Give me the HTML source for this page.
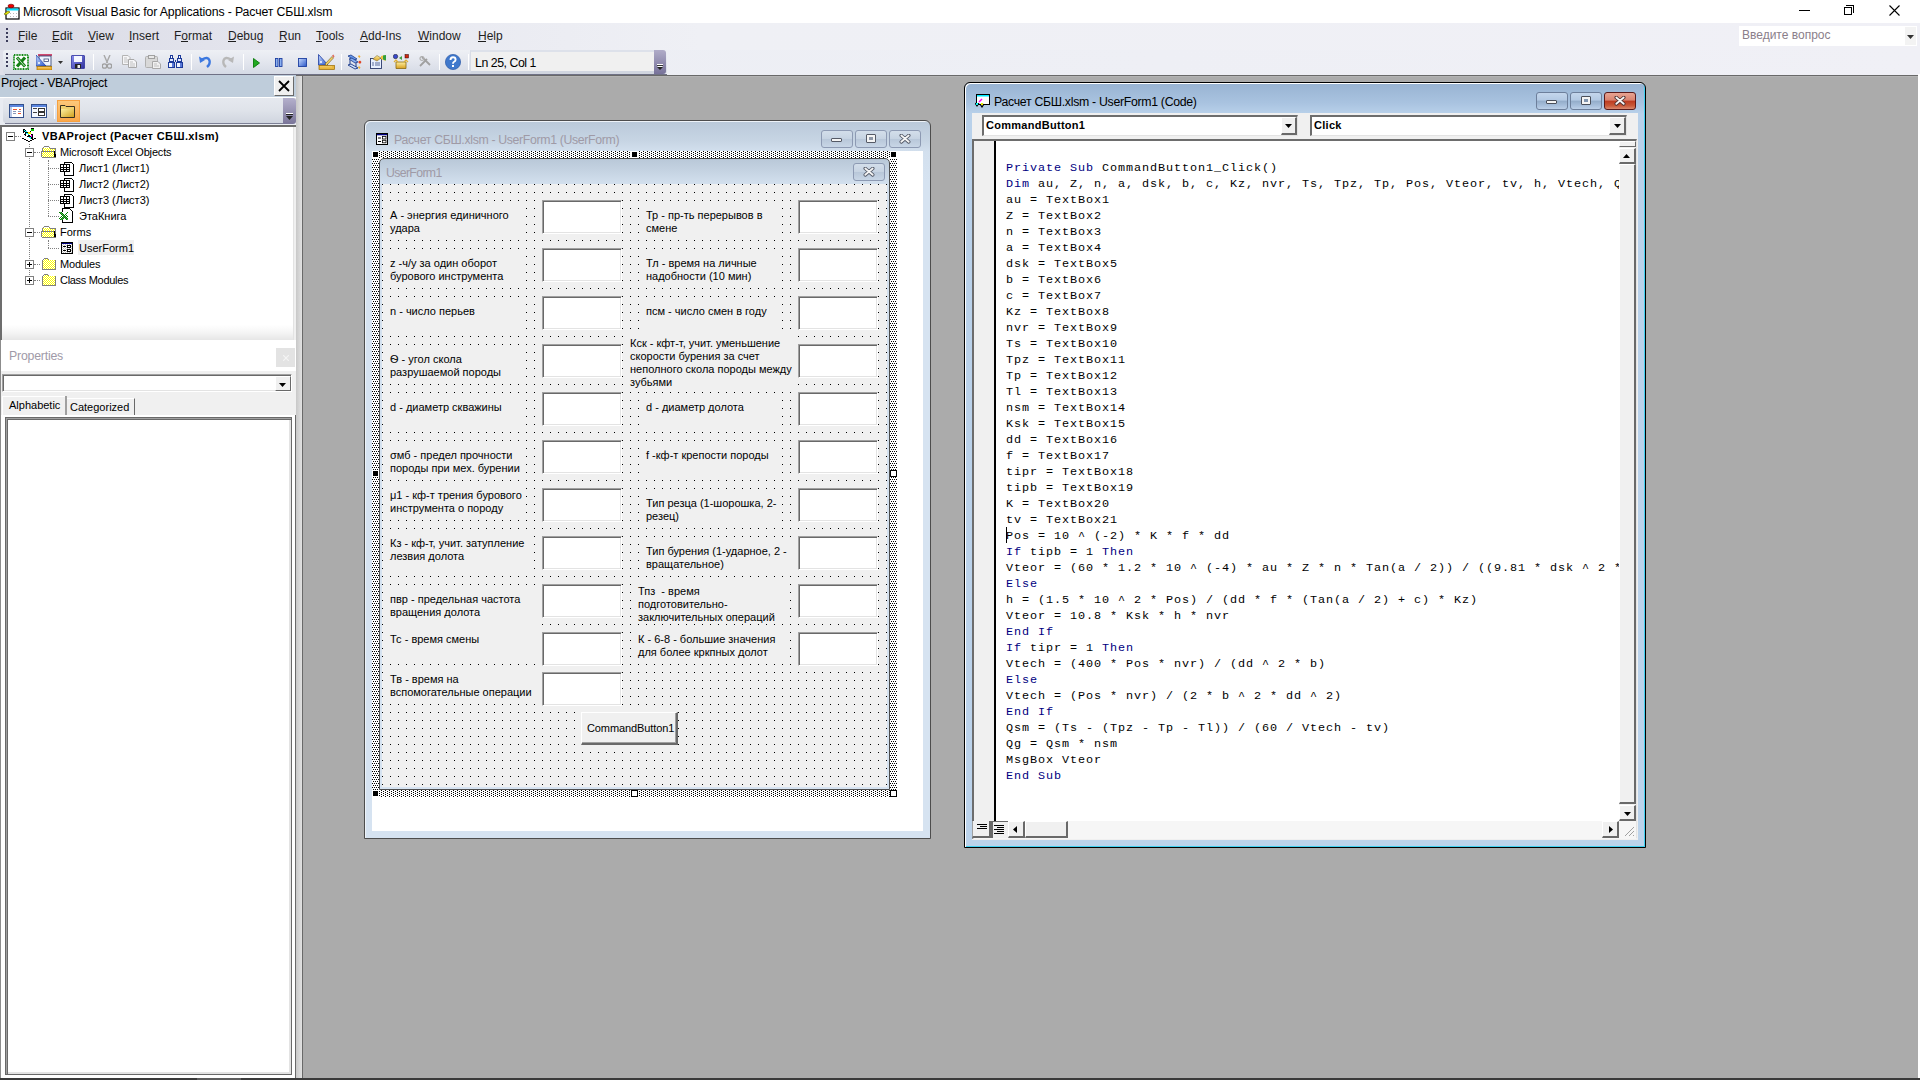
<!DOCTYPE html>
<html><head><meta charset="utf-8">
<style>
*{margin:0;padding:0;box-sizing:border-box}
html,body{width:1920px;height:1080px;overflow:hidden;background:#ababab;font-family:"Liberation Sans",sans-serif;position:relative}
.a{position:absolute}
.t{position:absolute;white-space:pre;line-height:1}
.menu{position:absolute;font-size:12px;color:#1e1e1e;top:29px;white-space:pre;line-height:14px}
.ul{position:absolute;height:1px;background:#1e1e1e}
.tb{position:absolute}
.tree{position:absolute;font-family:"Liberation Sans",sans-serif;font-size:11px;color:#000;white-space:pre;line-height:13px}
.lbl{position:absolute;font-family:"Liberation Sans",sans-serif;font-size:11px;color:#000;line-height:13px;background:#f0f0f0;white-space:pre;padding-left:2px}
.txt{position:absolute;background:#fff;border-top:1px solid #a0a0a0;border-left:1px solid #a0a0a0;border-right:1px solid #fff;border-bottom:1px solid #fff;box-shadow:inset 1px 1px 0 #696969,inset -1px -1px 0 #e3e3e3}
.code{position:absolute;font-family:"Liberation Mono",monospace;font-size:11.8px;letter-spacing:0.92px;line-height:16px;white-space:pre;color:#000}
.kw{color:#00007f}
</style></head><body>
<!-- ===== TITLE BAR ===== -->
<div class="a" style="left:0;top:0;width:1920px;height:23px;background:#fff"></div>
<svg class="a" style="left:2px;top:2px" width="18" height="18" viewBox="0 0 18 18">
 <rect x="4" y="6" width="13" height="11" fill="#fff" stroke="#000" stroke-width="1.2"/>
 <rect x="4.5" y="6.5" width="12" height="2" fill="#00e0ff"/>
 <g fill="#bbb"><rect x="8" y="11" width="1" height="1"/><rect x="11" y="11" width="1" height="1"/><rect x="14" y="11" width="1" height="1"/><rect x="8" y="14" width="1" height="1"/><rect x="11" y="14" width="1" height="1"/><rect x="14" y="14" width="1" height="1"/></g>
 <ellipse cx="9" cy="4" rx="3" ry="1.8" fill="#e00" stroke="#600" stroke-width=".6"/>
 <path d="M2 12 L6 9 L8 10 L4 13 Z" fill="#ee0" stroke="#550" stroke-width=".6"/>
</svg>
<div class="t" style="left:23px;top:6px;font-size:12.3px;letter-spacing:-0.14px;color:#000">Microsoft Visual Basic for Applications - Расчет СБШ.xlsm</div>
<!-- window controls -->
<div class="a" style="left:1799px;top:10px;width:11px;height:1px;background:#000"></div>
<div class="a" style="left:1844px;top:7px;width:8px;height:8px;border:1px solid #000;background:#fff"></div>
<div class="a" style="left:1846px;top:5px;width:8px;height:8px;border-top:1px solid #000;border-right:1px solid #000"></div>
<svg class="a" style="left:1889px;top:5px" width="11" height="11" viewBox="0 0 11 11"><path d="M0.5 0.5L10.5 10.5M10.5 0.5L0.5 10.5" stroke="#000" stroke-width="1.1"/></svg>

<!-- ===== MENU BAR ===== -->
<div class="a" style="left:0;top:23px;width:1920px;height:27px;background:linear-gradient(90deg,#d9dae5 0px,#e6e7ef 300px,#eff0f5 700px,#f0f0f6 1920px)"></div>
<svg class="a" style="left:5px;top:28px" width="4" height="16"><g fill="#3b3b5a"><rect x="1" y="0" width="2" height="2"/><rect x="1" y="4" width="2" height="2"/><rect x="1" y="8" width="2" height="2"/><rect x="1" y="12" width="2" height="2"/></g></svg>
<div class="menu" style="left:18px">File</div><div class="ul" style="left:18px;top:41px;width:6px"></div>
<div class="menu" style="left:52px">Edit</div><div class="ul" style="left:52px;top:41px;width:6px"></div>
<div class="menu" style="left:88px">View</div><div class="ul" style="left:88px;top:41px;width:7px"></div>
<div class="menu" style="left:129px">Insert</div><div class="ul" style="left:129px;top:41px;width:3px"></div>
<div class="menu" style="left:174px">Format</div><div class="ul" style="left:181px;top:41px;width:7px"></div>
<div class="menu" style="left:228px">Debug</div><div class="ul" style="left:228px;top:41px;width:8px"></div>
<div class="menu" style="left:279px">Run</div><div class="ul" style="left:279px;top:41px;width:7px"></div>
<div class="menu" style="left:316px">Tools</div><div class="ul" style="left:316px;top:41px;width:6px"></div>
<div class="menu" style="left:360px">Add-Ins</div><div class="ul" style="left:360px;top:41px;width:8px"></div>
<div class="menu" style="left:418px">Window</div><div class="ul" style="left:418px;top:41px;width:11px"></div>
<div class="menu" style="left:478px">Help</div><div class="ul" style="left:478px;top:41px;width:8px"></div>
<!-- ask box -->
<div class="a" style="left:1739px;top:26px;width:178px;height:20px;background:#fff"></div>
<div class="a" style="left:1905px;top:27px;width:11px;height:18px;background:#f3f3f3"></div>
<div class="t" style="left:1742px;top:29px;font-size:12px;color:#8a7e8a">Введите вопрос</div>
<svg class="a" style="left:1907px;top:35px" width="7" height="4"><path d="M0 0H7L3.5 4Z" fill="#333"/></svg>

<!-- ===== TOOLBAR ===== -->
<div class="a" style="left:0;top:50px;width:1920px;height:25px;background:linear-gradient(90deg,#dfe0ea 0px,#eceef4 400px,#f0f0f6 1920px)"></div>
<div class="a" style="left:3px;top:50px;width:664px;height:24px;border-radius:3px;background:linear-gradient(180deg,#eef0f5 0%,#e3e6ee 50%,#d5dae5 100%)"></div>
<div class="a" style="left:5px;top:74px;width:662px;height:1px;background:#6f7185"></div>
<div class="a" style="left:0;top:75px;width:1918px;height:1px;background:#696969"></div>
<div class="a" style="left:303px;top:76px;width:1615px;height:1px;background:#b4b4b4"></div>
<div class="a" style="left:1918px;top:74px;width:2px;height:1004px;background:#fff"></div>
<svg class="a" style="left:5px;top:53px" width="4" height="16"><g fill="#3b3b5a"><rect x="1" y="0" width="2" height="2"/><rect x="1" y="4" width="2" height="2"/><rect x="1" y="8" width="2" height="2"/><rect x="1" y="12" width="2" height="2"/></g></svg>
<svg class="a" style="left:0;top:0;width:0;height:0"><defs>
<pattern id="gck" width="2" height="2" patternUnits="userSpaceOnUse"><rect width="2" height="2" fill="#fff"/><rect x="0" y="0" width="1" height="1" fill="#008a00"/><rect x="1" y="1" width="1" height="1" fill="#008a00"/></pattern>
<linearGradient id="svg1" x1="0" y1="0" x2="1" y2="1"><stop offset="0" stop-color="#8a8ef0"/><stop offset="1" stop-color="#2e2f9a"/></linearGradient>
<linearGradient id="bl1" x1="0" y1="0" x2="1" y2="1"><stop offset="0" stop-color="#c8dcff"/><stop offset="1" stop-color="#2855c8"/></linearGradient>
<linearGradient id="yl1" x1="0" y1="0" x2="0" y2="1"><stop offset="0" stop-color="#fff0a0"/><stop offset="1" stop-color="#d8a020"/></linearGradient>
</defs></svg>
<!-- excel -->
<svg class="a" style="left:13px;top:54px" width="16" height="16" viewBox="0 0 16 16"><rect x="1" y="1" width="14" height="14" fill="#fff" stroke="#138a13" stroke-width="2" stroke-dasharray="1 .6"/><path d="M4 3.5L12 12.5M12 3.5L4 12.5" stroke="#168016" stroke-width="3.2"/><path d="M4.5 4L11.5 12" stroke="#e8f8e8" stroke-width=".8"/></svg>
<!-- userform insert -->
<svg class="a" style="left:36px;top:54px" width="16" height="16" viewBox="0 0 16 16"><rect x="2" y="0" width="14" height="2" fill="#d04a70"/><rect x="3" y="2" width="12" height="10" fill="#eef4ff" stroke="#2a3a6a" stroke-width=".8"/><rect x="8" y="5" width="4.5" height="2.5" fill="#fff" stroke="#3a4a7a" stroke-width=".8"/><path d="M0 1V12H10Z" fill="url(#bl1)" stroke="#1a3aa0" stroke-width=".7"/><circle cx="3" cy="9" r="1" fill="#fff"/><rect x="1" y="12.5" width="15" height="3.5" fill="#f0b030" stroke="#a07000" stroke-width=".7"/><path d="M3 13V14M5 13V14M7 13V14M9 13V14M11 13V14M13 13V14" stroke="#fff3c0" stroke-width=".6"/></svg>
<svg class="a" style="left:58px;top:61px" width="5" height="3"><path d="M0 0H5L2.5 3Z" fill="#333"/></svg>
<!-- save -->
<svg class="a" style="left:71px;top:55px" width="14" height="14" viewBox="0 0 14 14"><rect x="0.5" y="0.5" width="13" height="13" rx=".5" fill="url(#svg1)" stroke="#3034a0" stroke-width=".8"/><rect x="3" y="1" width="8" height="6" fill="#f4f6ff"/><rect x="4" y="9" width="6" height="4.5" fill="#222"/><rect x="6.5" y="10" width="2.5" height="3" fill="#eee"/></svg>
<div class="a" style="left:93px;top:54px;width:1px;height:16px;background:#fff"></div>
<!-- cut -->
<svg class="a" style="left:102px;top:55px" width="10" height="14" viewBox="0 0 10 14"><path d="M2 0L5.5 8M8 0L4.5 8" stroke="#a8a8a8" stroke-width="1.4"/><circle cx="2.5" cy="11" r="2.2" fill="none" stroke="#a0a0a0" stroke-width="1.3"/><circle cx="7.5" cy="11" r="2.2" fill="none" stroke="#a0a0a0" stroke-width="1.3"/></svg>
<!-- copy -->
<svg class="a" style="left:122px;top:55px" width="15" height="13" viewBox="0 0 15 13"><path d="M0.5 0.5H6L8 2.5V9.5H0.5Z" fill="#f6f6f8" stroke="#b4b4b4"/><path d="M6.5 4.5H12L14.5 7V12.5H6.5Z" fill="#f6f6f8" stroke="#a8a8a8"/><path d="M2 3H5M2 5H6M2 7H6M8 7H11M8 9H13M8 11H13" stroke="#c0c0c0"/></svg>
<!-- paste -->
<svg class="a" style="left:145px;top:55px" width="16" height="14" viewBox="0 0 16 14"><rect x="0.5" y="1.5" width="12" height="11" rx="1" fill="#d8d8d8" stroke="#b0b0b0"/><rect x="3.5" y="0.5" width="6" height="3" fill="#e8e8e8" stroke="#a0a0a0"/><path d="M7.5 6.5H13L15.5 9V13.5H7.5Z" fill="#f0f0f0" stroke="#a8a8a8"/><path d="M9 9H12M9 11H14" stroke="#c0c0c0"/></svg>
<!-- find -->
<svg class="a" style="left:168px;top:55px" width="15" height="13" viewBox="0 0 15 13" shape-rendering="crispEdges"><path d="M2 0H5V3H6V7H7V13H0V7H1V3H2Z" fill="#1c3a9a"/><path d="M10 0H13V3H14V7H15V13H8V7H9V3H10Z" fill="#1c3a9a"/><rect x="3" y="1" width="1" height="2" fill="#fff"/><rect x="11" y="1" width="1" height="2" fill="#fff"/><rect x="2" y="4" width="3" height="2" fill="#dfe8ff"/><rect x="10" y="4" width="3" height="2" fill="#dfe8ff"/><rect x="1" y="8" width="3" height="4" fill="#f0f4ff"/><rect x="9" y="8" width="3" height="4" fill="#f0f4ff"/><rect x="4" y="8" width="2" height="4" fill="#5a7ad8"/><rect x="12" y="8" width="2" height="4" fill="#5a7ad8"/><rect x="7" y="5" width="1" height="2" fill="#1c3a9a"/></svg>
<div class="a" style="left:191px;top:54px;width:1px;height:16px;background:#fff"></div>
<!-- undo -->
<svg class="a" style="left:199px;top:55px" width="13" height="13" viewBox="0 0 13 13"><path d="M3 4.5 Q9 1 10.5 5.5 Q11.5 9 8 12" fill="none" stroke="#3c78e0" stroke-width="2.4"/><path d="M0 1.5L1 8L6 5Z" fill="#3c78e0"/></svg>
<!-- redo -->
<svg class="a" style="left:221px;top:55px" width="13" height="13" viewBox="0 0 13 13"><path d="M10 4.5 Q4 1 2.5 5.5 Q1.5 9 5 12" fill="none" stroke="#b8b8b8" stroke-width="2.4"/><path d="M13 1.5L12 8L7 5Z" fill="#b8b8b8"/></svg>
<div class="a" style="left:243px;top:54px;width:1px;height:16px;background:#fff"></div>
<!-- run -->
<svg class="a" style="left:253px;top:58px" width="7" height="10"><path d="M0.5 0.5L6.5 5L0.5 9.5Z" fill="#22aa22" stroke="#0a7a0a" stroke-width=".9"/></svg>
<!-- pause -->
<svg class="a" style="left:275px;top:58px" width="8" height="9"><rect x="0.5" y="0.5" width="2.5" height="8" fill="#8ab0f0" stroke="#1d3fa0" stroke-width=".9"/><rect x="4.5" y="0.5" width="2.5" height="8" fill="#8ab0f0" stroke="#1d3fa0" stroke-width=".9"/></svg>
<!-- stop -->
<svg class="a" style="left:298px;top:58px" width="9" height="9"><rect x="0.5" y="0.5" width="8" height="8" fill="url(#bl1)" stroke="#1d3fa0" stroke-width=".9"/></svg>
<!-- design mode -->
<svg class="a" style="left:318px;top:54px" width="17" height="16" viewBox="0 0 17 16"><path d="M0.5 0.5V11H10Z" fill="url(#bl1)" stroke="#1a3aa0" stroke-width=".8"/><circle cx="3" cy="8" r="1" fill="#fff"/><path d="M7 10L14 2.5L15.5 4L8.5 11.5Z" fill="#f0d060" stroke="#6a5a30" stroke-width=".6"/><path d="M14 1.5L15.5 0.5L16.5 2.5L15.5 4Z" fill="#e07060"/><rect x="1" y="11.5" width="15.5" height="4" fill="#e8b63a" stroke="#9a6a00" stroke-width=".7"/><path d="M3 12V13.5M5 12V13.5M7 12V13.5M9 12V13.5M11 12V13.5M13 12V13.5" stroke="#fff0b0" stroke-width=".6"/></svg>
<div class="a" style="left:341px;top:54px;width:1px;height:16px;background:#fff"></div>
<!-- project explorer -->
<svg class="a" style="left:347px;top:54px" width="17" height="16" viewBox="0 0 17 16"><path d="M1 2L4 1L10 5L7 6Z" fill="#6a9aec" stroke="#1a3a8a" stroke-width=".8"/><path d="M2 5L5 4L11 8L8 9Z" fill="#8ab0f0" stroke="#1a3a8a" stroke-width=".8"/><path d="M1 11L4 10L11 14L8 15Z" fill="#d0e0f8" stroke="#1a3a8a" stroke-width=".9"/><path d="M3 6V10M9 9V13" stroke="#1a3a8a"/><path d="M11 8L13 6.5L14.5 8L13 10Z" fill="#e04020"/><path d="M12 1L13.5 2.5L12.5 4L11 2.5Z" fill="#f0b030"/><path d="M12 12L13.5 13.5L12.5 15L11 13.5Z" fill="#f0b030"/></svg>
<!-- properties -->
<svg class="a" style="left:370px;top:55px" width="17" height="14" viewBox="0 0 17 14"><rect x="0.5" y="3.5" width="11" height="10" fill="#e8f0ff" stroke="#2a3a6a" stroke-width=".9"/><path d="M2 8H4M5 8H10M2 10H4M5 10H10" stroke="#5a6a9a"/><path d="M3 4L7 0.5L11 3L7 6Z" fill="url(#yl1)" stroke="#8a7030" stroke-width=".6"/><path d="M11 1L15.5 0V6L11 4Z" fill="#f0c040"/><path d="M13 0.5L16 0V5.5L13 4.5Z" fill="#30a040"/></svg>
<!-- object browser -->
<svg class="a" style="left:393px;top:54px" width="17" height="15" viewBox="0 0 17 15"><circle cx="2.5" cy="2.5" r="2.2" fill="#3a4ad0" stroke="#111" stroke-width=".5"/><rect x="12" y="0.5" width="3.5" height="3.5" fill="#d02a10" stroke="#300" stroke-width=".5"/><path d="M6 4L9 2V6Z" fill="#40a040"/><path d="M3 8H13V14.5H3Z" fill="url(#yl1)" stroke="#8a6a10" stroke-width=".8"/><path d="M1 8L3 6L5 8M11 8L13 6L15 8" fill="none" stroke="#e0b030" stroke-width="1.2"/></svg>
<!-- toolbox -->
<svg class="a" style="left:419px;top:56px" width="12" height="11" viewBox="0 0 12 11"><path d="M1 10L8 3M3 1L11 9" stroke="#a0a0a0" stroke-width="1.8"/><circle cx="3" cy="2.5" r="2" fill="none" stroke="#b0b0b0" stroke-width="1.2"/></svg>
<div class="a" style="left:439px;top:54px;width:1px;height:16px;background:#fff"></div>
<!-- help -->
<svg class="a" style="left:445px;top:54px" width="16" height="16" viewBox="0 0 16 16"><circle cx="8" cy="8" r="7.6" fill="#3f78cc" stroke="#2c5aa8" stroke-width=".7"/><path d="M5.5 6 Q5.5 3.3 8 3.3 Q10.6 3.3 10.6 5.7 Q10.6 7.2 8.8 8 Q8 8.4 8 9.8" fill="none" stroke="#fff" stroke-width="1.9"/><rect x="7" y="11" width="2" height="2" fill="#fff"/></svg>
<div class="a" style="left:468px;top:54px;width:1px;height:16px;background:#fff"></div>
<!-- Ln field -->
<div class="a" style="left:470px;top:50px;width:185px;height:24px;background:#f0f0f0;border-top:2px solid #dde1ea;border-bottom:3px solid #d0d5df;border-left:1px solid #d8dce5"></div>
<div class="t" style="left:475px;top:57px;font-size:12.3px;letter-spacing:-0.45px;color:#000">Ln 25, Col 1</div>
<div class="a" style="left:654px;top:50px;width:12px;height:24px;border-radius:0 3px 3px 0;background:linear-gradient(180deg,#b0acc8,#77729a)"></div>
<svg class="a" style="left:657px;top:64px" width="7" height="7"><rect x="0" y="0" width="6" height="1" fill="#fff"/><path d="M0 2H6L3 5Z" fill="#fff"/><rect x="0" y="1" width="6" height="1" fill="#333"/><path d="M0 3H6L3 6Z" fill="#222"/></svg>
<!-- ===== LEFT DOCK ===== -->
<div class="a" style="left:0;top:76px;width:303px;height:1004px;background:#f0f0f0"></div>
<div class="a" style="left:302px;top:76px;width:1px;height:1002px;background:#696969"></div>
<!-- project title -->
<div class="a" style="left:0;top:75px;width:296px;height:22px;background:#bfcddb"></div>
<div class="t" style="left:1px;top:77px;font-size:12.3px;letter-spacing:-0.3px;color:#000">Project - VBAProject</div>
<div class="a" style="left:274px;top:76px;width:20px;height:20px;background:#f0f0f0;border-right:1px solid #696969;border-bottom:1px solid #696969;border-top:1px solid #fff;border-left:1px solid #fff"></div>
<svg class="a" style="left:278px;top:80px" width="12" height="12"><path d="M1 1L11 11M11 1L1 11" stroke="#000" stroke-width="1.8"/></svg>
<!-- project toolbar -->
<div class="a" style="left:0;top:97px;width:296px;height:1px;background:#fff"></div>
<div class="a" style="left:0;top:98px;width:296px;height:27px;background:#e9ecf2"></div>
<div class="a" style="left:3px;top:98px;width:293px;height:25px;border-radius:3px;background:linear-gradient(180deg,#e6e9ef 0%,#dfe3ea 50%,#d0d5df 100%)"></div>
<div class="a" style="left:5px;top:123px;width:278px;height:1px;background:#7d8096"></div>
<div class="a" style="left:283px;top:98px;width:13px;height:26px;border-radius:0 3px 3px 0;background:linear-gradient(180deg,#b4b0cc,#7a7599)"></div>
<svg class="a" style="left:286px;top:113px" width="8" height="8"><rect x="0" y="0" width="7" height="1" fill="#fff"/><rect x="0" y="1" width="7" height="1" fill="#222"/><path d="M0 3H7L3.5 7Z" fill="#222"/></svg>
<!-- view code icon -->
<svg class="a" style="left:9px;top:104px" width="15" height="14" viewBox="0 0 15 14"><rect x="0.5" y="0.5" width="14" height="13" fill="#fff" stroke="#34508a"/><rect x="1" y="1" width="13" height="2" fill="#5b86e0"/><rect x="1" y="3" width="2" height="10" fill="#b8c8e8"/><rect x="4" y="5" width="4" height="1" fill="#ee5533"/><rect x="10" y="5" width="2" height="1" fill="#ee5533"/><rect x="4" y="7" width="3" height="1" fill="#8898b8"/><rect x="9" y="7" width="3" height="1" fill="#8898b8"/><rect x="4" y="9" width="3" height="1" fill="#8898b8"/><rect x="9" y="9" width="3" height="1" fill="#ee5533"/></svg>
<!-- view object icon -->
<svg class="a" style="left:31px;top:104px" width="16" height="14" viewBox="0 0 16 14"><rect x="0.5" y="0.5" width="15" height="13" fill="#f4f8ff" stroke="#34508a"/><rect x="1" y="1" width="14" height="2" fill="#5b86e0"/><rect x="2" y="4" width="4" height="1" fill="#444"/><rect x="2" y="8" width="4" height="1" fill="#444"/><rect x="7.5" y="4.5" width="6" height="3" fill="#fff" stroke="#333"/><rect x="7.5" y="8.5" width="6" height="3" fill="#fff" stroke="#333"/></svg>
<div class="a" style="left:54px;top:105px;width:1px;height:14px;background:#fff"></div>
<!-- folder highlighted -->
<div class="a" style="left:57px;top:100px;width:23px;height:22px;background:linear-gradient(180deg,#fdc87a,#fba84a);border:1px solid #f6a040"></div>
<svg class="a" style="left:60px;top:104px" width="16" height="14" viewBox="0 0 16 14"><path d="M0.5 1.5H5L6 2.5H14.5V13.5H0.5Z" fill="#f0d070" stroke="#3a3020"/><path d="M1 5H14V13H1Z" fill="url(#fg)"/><defs><linearGradient id="fg" x1="0" y1="0" x2="1" y2="1"><stop offset="0" stop-color="#fff0a0"/><stop offset="1" stop-color="#d0a020"/></linearGradient></defs></svg>
<!-- tree border -->
<div class="a" style="left:0;top:125px;width:296px;height:2px;background:#6d6d6d"></div>
<div class="a" style="left:0;top:125px;width:2px;height:215px;background:#6d6d6d"></div>
<div class="a" style="left:2px;top:127px;width:292px;height:213px;background:linear-gradient(180deg,#fff 0,#fff 198px,#f4f4f4 206px,#e6e6e6 213px)"></div>
<div class="a" style="left:293px;top:127px;width:1px;height:213px;background:#e3e3e3"></div>
<!-- tree lines -->
<div class="a" style="left:29px;top:144px;width:1px;height:137px;border-left:1px dotted #808080"></div>
<div class="a" style="left:15px;top:136px;width:6px;height:1px;border-top:1px dotted #808080"></div>
<div class="a" style="left:34px;top:152px;width:6px;height:1px;border-top:1px dotted #808080"></div>
<div class="a" style="left:34px;top:232px;width:6px;height:1px;border-top:1px dotted #808080"></div>
<div class="a" style="left:34px;top:264px;width:6px;height:1px;border-top:1px dotted #808080"></div>
<div class="a" style="left:34px;top:280px;width:6px;height:1px;border-top:1px dotted #808080"></div>
<div class="a" style="left:48px;top:160px;width:1px;height:56px;border-left:1px dotted #808080"></div>
<div class="a" style="left:48px;top:240px;width:1px;height:8px;border-left:1px dotted #808080"></div>
<div class="a" style="left:48px;top:168px;width:11px;height:1px;border-top:1px dotted #808080"></div>
<div class="a" style="left:48px;top:184px;width:11px;height:1px;border-top:1px dotted #808080"></div>
<div class="a" style="left:48px;top:200px;width:11px;height:1px;border-top:1px dotted #808080"></div>
<div class="a" style="left:48px;top:216px;width:11px;height:1px;border-top:1px dotted #808080"></div>
<div class="a" style="left:48px;top:248px;width:11px;height:1px;border-top:1px dotted #808080"></div>
<!-- expanders -->
<div class="a" style="left:6px;top:132px;width:9px;height:9px;border:1px solid #808080;background:#fff"></div><div class="a" style="left:8px;top:136px;width:5px;height:1px;background:#000"></div>
<div class="a" style="left:25px;top:148px;width:9px;height:9px;border:1px solid #808080;background:#fff"></div><div class="a" style="left:27px;top:152px;width:5px;height:1px;background:#000"></div>
<div class="a" style="left:25px;top:228px;width:9px;height:9px;border:1px solid #808080;background:#fff"></div><div class="a" style="left:27px;top:232px;width:5px;height:1px;background:#000"></div>
<div class="a" style="left:25px;top:260px;width:9px;height:9px;border:1px solid #808080;background:#fff"></div><div class="a" style="left:27px;top:264px;width:5px;height:1px;background:#000"></div><div class="a" style="left:29px;top:262px;width:1px;height:5px;background:#000"></div>
<div class="a" style="left:25px;top:276px;width:9px;height:9px;border:1px solid #808080;background:#fff"></div><div class="a" style="left:27px;top:280px;width:5px;height:1px;background:#000"></div><div class="a" style="left:29px;top:278px;width:1px;height:5px;background:#000"></div>
<!-- icons -->
<svg class="a" style="left:0;top:0;width:0;height:0"><defs>
<pattern id="yh" width="2" height="2" patternUnits="userSpaceOnUse"><rect width="2" height="2" fill="#fff"/><rect x="0" y="0" width="1" height="1" fill="#ffff00"/><rect x="1" y="1" width="1" height="1" fill="#ffff00"/></pattern>
<pattern id="yh2" width="2" height="2" patternUnits="userSpaceOnUse"><rect width="2" height="2" fill="#c0c0c0"/><rect x="0" y="0" width="1" height="1" fill="#ffff00"/><rect x="1" y="1" width="1" height="1" fill="#ffff00"/></pattern>
<pattern id="gh" width="2" height="2" patternUnits="userSpaceOnUse"><rect width="2" height="2" fill="#fff"/><rect x="0" y="0" width="1" height="1" fill="#c0c0c0"/><rect x="1" y="1" width="1" height="1" fill="#c0c0c0"/></pattern>
<pattern id="grh" width="2" height="2" patternUnits="userSpaceOnUse"><rect width="2" height="2" fill="#fff"/><rect x="0" y="0" width="1" height="1" fill="#008000"/><rect x="1" y="1" width="1" height="1" fill="#008000"/></pattern>
</defs></svg>
<svg class="a" style="left:21px;top:128px" width="16" height="16" viewBox="0 0 16 16" shape-rendering="crispEdges">
<path d="M1 10H3V11H5V12H7V13H9V12H11V11H13V10H15V11H13V12H11V13H9V14H7V13H5V12H3V11H1Z" fill="#000"/>
<path d="M2 1H4V2H5V3H6V4H7V5H8V7H9V8H10V9H11V10H12V11H10V10H9V9H6V8H4V7H3V5H2Z" fill="#000"/>
<rect x="3" y="2" width="1" height="1" fill="#0ff"/><rect x="4" y="3" width="2" height="1" fill="#0ff"/><rect x="5" y="5" width="2" height="1" fill="#0ff"/><rect x="7" y="6" width="1" height="1" fill="#0ff"/><rect x="8" y="9" width="2" height="1" fill="#0ff"/><rect x="9" y="10" width="1" height="1" fill="#0ff"/>
<rect x="3" y="4" width="1" height="2" fill="#fff"/><rect x="5" y="6" width="2" height="2" fill="#fff"/>
<rect x="10" y="0" width="3" height="1" fill="#000"/><rect x="10" y="1" width="3" height="2" fill="#0c0"/><rect x="9" y="3" width="1" height="2" fill="#000"/>
<rect x="7" y="4" width="3" height="2" fill="#ee0"/><rect x="10" y="6" width="2" height="4" fill="#000"/><rect x="10" y="7" width="1" height="2" fill="#f0f"/>
</svg>
<svg class="a" style="left:41px;top:146px" width="15" height="13" viewBox="0 0 15 13" shape-rendering="crispEdges">
<rect x="3" y="0" width="5" height="1" fill="#808080"/><rect x="2" y="1" width="1" height="1" fill="#808080"/><rect x="8" y="1" width="1" height="1" fill="#808080"/><rect x="3" y="1" width="5" height="1" fill="#fff"/>
<rect x="1" y="2" width="1" height="3" fill="#808080"/><rect x="9" y="2" width="5" height="1" fill="#808080"/><rect x="14" y="2" width="1" height="10" fill="#808080"/>
<rect x="2" y="2" width="7" height="1" fill="url(#yh)"/><rect x="2" y="3" width="12" height="2" fill="url(#yh)"/>
<rect x="0" y="5" width="13" height="1" fill="#808080"/><rect x="0" y="6" width="1" height="5" fill="#808080"/><rect x="1" y="6" width="12" height="5" fill="url(#yh)"/>
<rect x="13" y="5" width="1" height="3" fill="#000"/><rect x="13" y="8" width="2" height="3" fill="#000"/>
<rect x="1" y="11" width="14" height="1" fill="#808080"/>
</svg>
<svg class="a" style="left:41px;top:226px" width="15" height="13" viewBox="0 0 15 13" shape-rendering="crispEdges">
<rect x="3" y="0" width="5" height="1" fill="#808080"/><rect x="2" y="1" width="1" height="1" fill="#808080"/><rect x="8" y="1" width="1" height="1" fill="#808080"/><rect x="3" y="1" width="5" height="1" fill="#fff"/>
<rect x="1" y="2" width="1" height="3" fill="#808080"/><rect x="9" y="2" width="5" height="1" fill="#808080"/><rect x="14" y="2" width="1" height="10" fill="#808080"/>
<rect x="2" y="2" width="7" height="1" fill="url(#yh)"/><rect x="2" y="3" width="12" height="2" fill="url(#yh)"/>
<rect x="0" y="5" width="13" height="1" fill="#808080"/><rect x="0" y="6" width="1" height="5" fill="#808080"/><rect x="1" y="6" width="12" height="5" fill="url(#yh)"/>
<rect x="13" y="5" width="1" height="3" fill="#000"/><rect x="13" y="8" width="2" height="3" fill="#000"/>
<rect x="1" y="11" width="14" height="1" fill="#808080"/>
</svg>
<svg class="a" style="left:42px;top:258px" width="14" height="12" viewBox="0 0 14 12" shape-rendering="crispEdges">
<path d="M1 1H2V0H6V1H7V2H14V12H0V2H1Z" fill="#808080"/><rect x="2" y="1" width="4" height="1" fill="url(#yh)"/><rect x="1" y="2" width="12" height="9" fill="url(#yh)"/>
</svg>
<svg class="a" style="left:42px;top:274px" width="14" height="12" viewBox="0 0 14 12" shape-rendering="crispEdges">
<path d="M1 1H2V0H6V1H7V2H14V12H0V2H1Z" fill="#808080"/><rect x="2" y="1" width="4" height="1" fill="url(#yh)"/><rect x="1" y="2" width="12" height="9" fill="url(#yh)"/>
</svg>
<svg class="a" style="left:60px;top:161px" width="16" height="15" viewBox="0 0 16 15" shape-rendering="crispEdges"><path d="M4 1H12V2H13V3H14V15H4Z" fill="#000"/><path d="M5 2H12V3H13V14H5Z" fill="#fff"/><rect x="12" y="2" width="1" height="1" fill="#000"/><rect x="0" y="3" width="10" height="8" fill="#000"/><rect x="1" y="4" width="2" height="2" fill="#fff"/><rect x="4" y="4" width="2" height="2" fill="#fff"/><rect x="7" y="4" width="2" height="2" fill="#fff"/><rect x="1" y="7" width="2" height="1" fill="#fff"/><rect x="4" y="7" width="2" height="1" fill="#fff"/><rect x="7" y="7" width="2" height="1" fill="#fff"/><rect x="1" y="9" width="2" height="1" fill="#fff"/><rect x="4" y="9" width="2" height="1" fill="#fff"/><rect x="7" y="9" width="2" height="1" fill="#fff"/></svg>
<svg class="a" style="left:60px;top:177px" width="16" height="15" viewBox="0 0 16 15" shape-rendering="crispEdges"><path d="M4 1H12V2H13V3H14V15H4Z" fill="#000"/><path d="M5 2H12V3H13V14H5Z" fill="#fff"/><rect x="12" y="2" width="1" height="1" fill="#000"/><rect x="0" y="3" width="10" height="8" fill="#000"/><rect x="1" y="4" width="2" height="2" fill="#fff"/><rect x="4" y="4" width="2" height="2" fill="#fff"/><rect x="7" y="4" width="2" height="2" fill="#fff"/><rect x="1" y="7" width="2" height="1" fill="#fff"/><rect x="4" y="7" width="2" height="1" fill="#fff"/><rect x="7" y="7" width="2" height="1" fill="#fff"/><rect x="1" y="9" width="2" height="1" fill="#fff"/><rect x="4" y="9" width="2" height="1" fill="#fff"/><rect x="7" y="9" width="2" height="1" fill="#fff"/></svg>
<svg class="a" style="left:60px;top:193px" width="16" height="15" viewBox="0 0 16 15" shape-rendering="crispEdges"><path d="M4 1H12V2H13V3H14V15H4Z" fill="#000"/><path d="M5 2H12V3H13V14H5Z" fill="#fff"/><rect x="12" y="2" width="1" height="1" fill="#000"/><rect x="0" y="3" width="10" height="8" fill="#000"/><rect x="1" y="4" width="2" height="2" fill="#fff"/><rect x="4" y="4" width="2" height="2" fill="#fff"/><rect x="7" y="4" width="2" height="2" fill="#fff"/><rect x="1" y="7" width="2" height="1" fill="#fff"/><rect x="4" y="7" width="2" height="1" fill="#fff"/><rect x="7" y="7" width="2" height="1" fill="#fff"/><rect x="1" y="9" width="2" height="1" fill="#fff"/><rect x="4" y="9" width="2" height="1" fill="#fff"/><rect x="7" y="9" width="2" height="1" fill="#fff"/></svg>
<svg class="a" style="left:59px;top:208px" width="16" height="15" viewBox="0 0 16 15" shape-rendering="crispEdges"><path d="M3 0H11V1H12V2H13V3H14V15H3Z" fill="#000"/><path d="M4 1H11V2H12V3H13V14H4Z" fill="#fff"/><rect x="11" y="1" width="1" height="1" fill="#000"/><path d="M0 4H3L5 6L7 4H9V5L7 7L9 9V12H7L5 10L3 12H0V10L2 8L0 6Z" fill="url(#grh)"/><path d="M0 4H2L5 7L8 4H9L6 8L9 12H8L5 9L2 12H0L4 8Z" fill="#008000" opacity=".7"/></svg>
<svg class="a" style="left:61px;top:242px" width="12" height="12" viewBox="0 0 12 12" shape-rendering="crispEdges"><rect x="0" y="0" width="12" height="12" fill="#000"/><rect x="1" y="1" width="10" height="1" fill="#000080"/><rect x="1" y="2" width="10" height="9" fill="url(#gh)"/><rect x="2" y="4" width="3" height="1" fill="#000"/><rect x="2" y="8" width="3" height="1" fill="#000"/><rect x="6" y="3" width="4" height="3" fill="#000"/><rect x="7" y="4" width="2" height="1" fill="#fff"/><rect x="6" y="7" width="4" height="3" fill="#000"/><rect x="7" y="8" width="2" height="1" fill="#fff"/></svg>
<!-- tree text -->
<div class="tree" style="left:42px;top:130px;font-weight:bold;letter-spacing:0.4px">VBAProject (Расчет СБШ.xlsm)</div>
<div class="tree" style="left:60px;top:146px;letter-spacing:-0.15px">Microsoft Excel Objects</div>
<div class="tree" style="left:79px;top:162px">Лист1 (Лист1)</div>
<div class="tree" style="left:79px;top:178px">Лист2 (Лист2)</div>
<div class="tree" style="left:79px;top:194px">Лист3 (Лист3)</div>
<div class="tree" style="left:79px;top:210px">ЭтаКнига</div>
<div class="tree" style="left:60px;top:226px">Forms</div>
<div class="a" style="left:78px;top:240px;width:56px;height:15px;background:#f0f0f0"></div>
<div class="tree" style="left:79px;top:242px">UserForm1</div>
<div class="tree" style="left:60px;top:258px;letter-spacing:-0.2px">Modules</div>
<div class="tree" style="left:60px;top:274px;letter-spacing:-0.3px">Class Modules</div>

<!-- ===== PROPERTIES ===== -->
<div class="a" style="left:0;top:340px;width:296px;height:31px;background:#fff"></div>
<div class="t" style="left:9px;top:350px;font-size:12.3px;letter-spacing:-0.2px;color:#a09aa8">Properties</div>
<div class="a" style="left:276px;top:348px;width:19px;height:19px;background:#e3e3e3"></div>
<svg class="a" style="left:283px;top:355px" width="6" height="6"><path d="M0 0L6 6M6 0L0 6" stroke="#f4f4f4" stroke-width="1.2"/></svg>
<div class="a" style="left:0;top:371px;width:296px;height:45px;background:#f0f0f0"></div>
<div class="a" style="left:2px;top:374px;width:290px;height:18px;background:#fff;border-top:1px solid #a0a0a0;border-left:1px solid #a0a0a0;border-right:1px solid #fff;border-bottom:1px solid #fff;box-shadow:inset 1px 1px 0 #696969,inset -1px -1px 0 #e3e3e3"></div>
<div class="a" style="left:275px;top:376px;width:16px;height:15px;background:#f0f0f0;border-right:1px solid #696969;border-bottom:1px solid #696969;border-left:1px solid #fff;border-top:1px solid #fff"></div>
<svg class="a" style="left:279px;top:383px" width="7" height="4"><path d="M0 0H7L3.5 4Z" fill="#000"/></svg>
<!-- tabs -->
<div class="a" style="left:2px;top:396px;width:64px;height:20px;background:#f0f0f0;border-left:1px solid #fff;border-top:1px solid #fff;border-right:1px solid #696969"></div>
<div class="a" style="left:65px;top:396px;width:2px;height:20px;background:#a0a0a0"></div>
<div class="t" style="left:9px;top:400px;font-size:11px;color:#000">Alphabetic</div>
<div class="a" style="left:67px;top:398px;width:68px;height:18px;background:#f0f0f0;border-top:1px solid #fff;border-right:1px solid #696969"></div>
<div class="t" style="left:70px;top:402px;font-size:11px;color:#000">Categorized</div>
<!-- list -->
<div class="a" style="left:0;top:415px;width:296px;height:663px;background:#fff;border-right:1px solid #696969"></div>
<div class="a" style="left:5px;top:417px;width:287px;height:658px;background:#fff;border-top:1px solid #696969;border-left:1px solid #696969;border-right:1px solid #696969;border-bottom:1px solid #696969;box-shadow:inset 1px 1px 0 #a0a0a0,inset 2px 2px 0 #696969,inset -2px -2px 0 #e3e3e3"></div>
<div class="a" style="left:296px;top:76px;width:6px;height:1002px;background:linear-gradient(90deg,#c8c8c8,#e2e2e2)"></div>
<div class="a" style="left:0;top:1078px;width:1920px;height:2px;background:#3a3a3a"></div>
<div class="a" style="left:197px;top:1078px;width:44px;height:2px;background:#5e5e5e"></div>
<div class="a" style="left:0;top:340px;width:1px;height:738px;background:#8c8c8c"></div>
<!-- ===== USERFORM WINDOW ===== -->
<div class="a" style="left:364px;top:120px;width:567px;height:719px;border:1px solid #4d4d4d;border-radius:6px 6px 0 0;background:linear-gradient(180deg,#bac9d9 0px,#c7d5e4 20px,#d3e0ee 31px,#d6e3f1 60px,#d6e3f1 100%);box-shadow:inset 1px 1px 0 #eef3f8"></div>
<svg class="a" style="left:376px;top:133px" width="12" height="12" viewBox="0 0 12 12"><rect x="0.5" y="0.5" width="11" height="11" fill="#fff" stroke="#000"/><rect x="1" y="1" width="10" height="1.3" fill="#000080"/><path d="M2 5H5M2 8.5H5" stroke="#000"/><rect x="6.5" y="3.5" width="3.5" height="2.5" fill="#fff" stroke="#000" stroke-width=".8"/><rect x="6.5" y="7.3" width="3.5" height="2.5" fill="#fff" stroke="#000" stroke-width=".8"/></svg>
<div class="t" style="left:394px;top:134px;font-size:12.3px;letter-spacing:-0.34px;color:#9f9aa6">Расчет СБШ.xlsm - UserForm1 (UserForm)</div>
<div class="a" style="left:821px;top:130px;width:32px;height:18px;border:1px solid #8d9ab3;border-radius:3px;background:linear-gradient(180deg,#d3deea 0%,#c6d3e2 50%,#b8c7d9 51%,#c8d6e6 100%)"></div><div class="a" style="left:831px;top:138px;width:11px;height:4px;background:#f4f4f4;border:1px solid #555a66;border-radius:1px"></div>
<div class="a" style="left:855px;top:130px;width:32px;height:18px;border:1px solid #8d9ab3;border-radius:3px;background:linear-gradient(180deg,#d3deea 0%,#c6d3e2 50%,#b8c7d9 51%,#c8d6e6 100%)"></div><div class="a" style="left:866px;top:134px;width:10px;height:9px;background:#f4f4f4;border:1px solid #555a66;border-radius:1px"></div><div class="a" style="left:869px;top:137px;width:4px;height:3px;background:#8d96a6"></div>
<div class="a" style="left:889px;top:130px;width:32px;height:18px;border:1px solid #8d9ab3;border-radius:3px;background:linear-gradient(180deg,#d3deea 0%,#c6d3e2 50%,#b8c7d9 51%,#c8d6e6 100%)"></div><svg class="a" style="left:899px;top:134px" width="12" height="10" viewBox="0 0 12 10"><path d="M2.3 1.5L9.7 7.8M9.7 1.5L2.3 7.8" stroke="#505664" stroke-width="3.6" stroke-linecap="round"/><path d="M2.3 1.5L9.7 7.8M9.7 1.5L2.3 7.8" stroke="#f5f5f5" stroke-width="1.8" stroke-linecap="round"/></svg>
<div class="a" style="left:372px;top:151px;width:551px;height:680px;background:#fff"></div>
<svg class="a" style="left:372px;top:151px" width="526" height="647" shape-rendering="crispEdges"><defs><pattern id="hh" width="4" height="2" patternUnits="userSpaceOnUse"><rect x="3" y="0" width="1" height="1" fill="#000"/><rect x="1" y="1" width="1" height="1" fill="#000"/></pattern><pattern id="hv" width="2" height="4" patternUnits="userSpaceOnUse"><rect x="0" y="0" width="1" height="1" fill="#000"/><rect x="1" y="2" width="1" height="1" fill="#000"/></pattern></defs><rect x="0" y="0" width="525" height="7" fill="url(#hh)"/><rect x="0" y="639" width="525" height="7" fill="url(#hh)"/><rect x="0" y="7" width="7" height="632" fill="url(#hv)"/><rect x="518" y="7" width="7" height="632" fill="url(#hv)"/></svg>
<div class="a" style="left:379px;top:158px;width:511px;height:632px;border:1px solid #4d4d4d;border-radius:5px 5px 0 0;background:linear-gradient(180deg,#b9c8d8 0px,#c5d3e2 12px,#d3e0ee 25px,#d6e3f1 100%)"></div>
<div class="t" style="left:386px;top:167px;font-size:12.3px;letter-spacing:-0.65px;color:#9f9aa6">UserForm1</div>
<div class="a" style="left:853px;top:163px;width:32px;height:18px;border:1px solid #8d9ab3;border-radius:3px;background:linear-gradient(180deg,#d3deea 0%,#c6d3e2 50%,#b8c7d9 51%,#c8d6e6 100%)"></div><svg class="a" style="left:863px;top:167px" width="12" height="10" viewBox="0 0 12 10"><path d="M2.3 1.5L9.7 7.8M9.7 1.5L2.3 7.8" stroke="#505664" stroke-width="3.6" stroke-linecap="round"/><path d="M2.3 1.5L9.7 7.8M9.7 1.5L2.3 7.8" stroke="#f5f5f5" stroke-width="1.8" stroke-linecap="round"/></svg>
<div class="a" style="left:382px;top:184px;width:505px;height:603px;background-color:#f0f0f0;background-image:radial-gradient(circle at 0.5px 0.5px,#000 0.6px,transparent 0.6px);background-size:8px 8px;background-position:0px 0px"></div>
<div class="a" style="left:372px;top:151px;width:7px;height:7px;background:#000;border:1px solid #fff"></div>
<div class="a" style="left:631px;top:151px;width:7px;height:7px;background:#000;border:1px solid #fff"></div>
<div class="a" style="left:890px;top:151px;width:7px;height:7px;background:#000;border:1px solid #fff"></div>
<div class="a" style="left:372px;top:470px;width:7px;height:7px;background:#000;border:1px solid #fff"></div>
<div class="a" style="left:890px;top:470px;width:7px;height:7px;background:#fff;border:1px solid #000"></div>
<div class="a" style="left:372px;top:790px;width:7px;height:7px;background:#000;border:1px solid #fff"></div>
<div class="a" style="left:631px;top:790px;width:7px;height:7px;background:#fff;border:1px solid #000"></div>
<div class="a" style="left:890px;top:790px;width:7px;height:7px;background:#fff;border:1px solid #000"></div>
<div class="lbl" style="left:388px;top:204px;width:137px;height:36px;padding-top:5px;padding-left:2px">А - энергия единичного<br>удара</div>
<div class="lbl" style="left:388px;top:252px;width:137px;height:36px;padding-top:5px;padding-left:2px">z -ч/у за один оборот<br>бурового инструмента</div>
<div class="lbl" style="left:388px;top:300px;width:137px;height:32px;padding-top:5px;padding-left:2px">n - число перьев</div>
<div class="lbl" style="left:388px;top:348px;width:137px;height:36px;padding-top:5px;padding-left:2px">Ѳ - угол скола<br>разрушаемой породы</div>
<div class="lbl" style="left:388px;top:396px;width:137px;height:32px;padding-top:5px;padding-left:2px">d - диаметр скважины</div>
<div class="lbl" style="left:388px;top:444px;width:137px;height:36px;padding-top:5px;padding-left:2px">σмб - предел прочности<br>породы при мех. бурении</div>
<div class="lbl" style="left:388px;top:484px;width:137px;height:36px;padding-top:5px;padding-left:2px">μ1 - кф-т трения бурового<br>инструмента о породу</div>
<div class="lbl" style="left:388px;top:532px;width:145px;height:40px;padding-top:5px;padding-left:2px">Кз - кф-т, учит. затупление<br>лезвия долота</div>
<div class="lbl" style="left:388px;top:588px;width:153px;height:40px;padding-top:5px;padding-left:2px">пвр - предельная частота<br>вращения долота</div>
<div class="lbl" style="left:388px;top:628px;width:153px;height:32px;padding-top:5px;padding-left:2px">Тс - время смены </div>
<div class="lbl" style="left:388px;top:668px;width:153px;height:32px;padding-top:5px;padding-left:2px">Тв - время на<br>вспомогательные операции</div>
<div class="lbl" style="left:643px;top:204px;width:138px;height:36px;padding-top:5px;padding-left:3px">Тр - пр-ть перерывов в<br>смене</div>
<div class="lbl" style="left:643px;top:252px;width:138px;height:36px;padding-top:5px;padding-left:3px">Тл - время на личные<br>надобности (10 мин)</div>
<div class="lbl" style="left:643px;top:300px;width:138px;height:32px;padding-top:5px;padding-left:3px">псм - число смен в году</div>
<div class="lbl" style="left:627px;top:332px;width:170px;height:56px;padding-top:5px;padding-left:3px">Кск - кфт-т, учит. уменьшение<br>скорости бурения за счет<br>неполного скола породы между<br>зубьями</div>
<div class="lbl" style="left:643px;top:396px;width:138px;height:32px;padding-top:5px;padding-left:3px">d - диаметр долота</div>
<div class="lbl" style="left:643px;top:444px;width:138px;height:32px;padding-top:5px;padding-left:3px">f -кф-т крепости породы</div>
<div class="lbl" style="left:643px;top:492px;width:138px;height:36px;padding-top:5px;padding-left:3px">Тип резца (1-шорошка, 2-<br>резец)</div>
<div class="lbl" style="left:643px;top:540px;width:154px;height:36px;padding-top:5px;padding-left:3px">Тип бурения (1-ударное, 2 -<br>вращательное)</div>
<div class="lbl" style="left:635px;top:580px;width:154px;height:44px;padding-top:5px;padding-left:3px">Тпз  - время<br>подготовительно-<br>заключительных операций</div>
<div class="lbl" style="left:635px;top:628px;width:154px;height:36px;padding-top:5px;padding-left:3px">К - 6-8 - большие значения<br>для более кркпных долот</div>
<div class="txt" style="left:542px;top:200px;width:80px;height:34px"></div>
<div class="txt" style="left:798px;top:200px;width:80px;height:34px"></div>
<div class="txt" style="left:542px;top:248px;width:80px;height:34px"></div>
<div class="txt" style="left:798px;top:248px;width:80px;height:34px"></div>
<div class="txt" style="left:542px;top:296px;width:80px;height:34px"></div>
<div class="txt" style="left:798px;top:296px;width:80px;height:34px"></div>
<div class="txt" style="left:542px;top:344px;width:80px;height:34px"></div>
<div class="txt" style="left:798px;top:344px;width:80px;height:34px"></div>
<div class="txt" style="left:542px;top:392px;width:80px;height:34px"></div>
<div class="txt" style="left:798px;top:392px;width:80px;height:34px"></div>
<div class="txt" style="left:542px;top:440px;width:80px;height:34px"></div>
<div class="txt" style="left:798px;top:440px;width:80px;height:34px"></div>
<div class="txt" style="left:542px;top:488px;width:80px;height:34px"></div>
<div class="txt" style="left:798px;top:488px;width:80px;height:34px"></div>
<div class="txt" style="left:542px;top:536px;width:80px;height:34px"></div>
<div class="txt" style="left:798px;top:536px;width:80px;height:34px"></div>
<div class="txt" style="left:542px;top:584px;width:80px;height:34px"></div>
<div class="txt" style="left:798px;top:584px;width:80px;height:34px"></div>
<div class="txt" style="left:542px;top:632px;width:80px;height:34px"></div>
<div class="txt" style="left:798px;top:632px;width:80px;height:34px"></div>
<div class="txt" style="left:542px;top:672px;width:80px;height:34px"></div>
<div class="a" style="left:581px;top:712px;width:97px;height:33px;background:#f0f0f0;border-top:1px solid #fff;border-left:1px solid #fff;border-right:2px solid #696969;border-bottom:2px solid #696969;box-shadow:inset -1px -1px 0 #a0a0a0"></div>
<div class="t" style="left:587px;top:723px;font-size:11px;letter-spacing:-0.1px;color:#000">CommandButton1</div>
<!-- ===== CODE WINDOW ===== -->
<div class="a" style="left:964px;top:82px;width:682px;height:766px;border:1px solid #000;border-radius:6px 6px 0 0;background:linear-gradient(180deg,#98b3d2 0px,#a9c3e0 20px,#b9d1ea 31px,#bcd3eb 100%);box-shadow:inset 1px 1px 0 #fff, inset -1px -1px 0 #40d0f0"></div>
<svg class="a" style="left:975px;top:94px" width="15" height="14" viewBox="0 0 15 14"><rect x="1.5" y="0.5" width="13" height="10" fill="#fff" stroke="#000"/><rect x="2" y="1" width="12" height="1.5" fill="#00e8ff"/><path d="M0 9L2 12L4 9" fill="none" stroke="#000" stroke-width="1.2"/><path d="M5 10L7 13L9 10" fill="none" stroke="#000" stroke-width="1.2"/><rect x="1" y="9" width="2" height="2" fill="#0ee"/><rect x="6" y="9" width="2" height="2" fill="#ee0"/><path d="M4 8L7 5" stroke="#f0f" stroke-width="1.5"/></svg>
<div class="t" style="left:994px;top:96px;font-size:12.3px;letter-spacing:-0.3px;color:#000">Расчет СБШ.xlsm - UserForm1 (Code)</div>
<div class="a" style="left:1536px;top:92px;width:32px;height:18px;border:1px solid #6d7f9b;border-radius:3px;background:linear-gradient(180deg,#c4d6ec 0%,#b3c9e3 45%,#93acc9 50%,#a9c0dc 80%,#bcd0e8 100%)"></div><div class="a" style="left:1546px;top:100px;width:11px;height:4px;background:#f4f4f4;border:1px solid #4a4f5a;border-radius:1px"></div>
<div class="a" style="left:1570px;top:92px;width:32px;height:18px;border:1px solid #6d7f9b;border-radius:3px;background:linear-gradient(180deg,#c4d6ec 0%,#b3c9e3 45%,#93acc9 50%,#a9c0dc 80%,#bcd0e8 100%)"></div><div class="a" style="left:1581px;top:96px;width:10px;height:9px;background:#f4f4f4;border:1px solid #4a4f5a;border-radius:1px"></div><div class="a" style="left:1584px;top:99px;width:4px;height:3px;background:#8296b0"></div>
<div class="a" style="left:1604px;top:92px;width:32px;height:18px;border:1px solid #5a1a1a;border-radius:3px;background:linear-gradient(180deg,#e8a493 0%,#d98370 45%,#bd3b20 50%,#c95a3a 80%,#d98a70 100%)"></div><svg class="a" style="left:1614px;top:96px" width="12" height="10" viewBox="0 0 12 10"><path d="M2.3 1.5L9.7 7.8M9.7 1.5L2.3 7.8" stroke="#4a3030" stroke-width="3.6" stroke-linecap="round"/><path d="M2.3 1.5L9.7 7.8M9.7 1.5L2.3 7.8" stroke="#f8f8f8" stroke-width="1.8" stroke-linecap="round"/></svg>
<div class="a" style="left:972px;top:113px;width:666px;height:727px;background:#f0f0f0"></div>
<div class="a" style="left:982px;top:115px;width:316px;height:21px;background:#fff;border-top:2px solid #6d6d6d;border-left:2px solid #6d6d6d;border-right:1px solid #e3e3e3;border-bottom:1px solid #e3e3e3"></div>
<div class="t" style="left:986px;top:120px;font-size:11px;font-weight:bold;letter-spacing:0.28px;color:#000">CommandButton1</div>
<div class="a" style="left:1281px;top:117px;width:16px;height:18px;background:#f0f0f0;border-top:1px solid #fff;border-left:1px solid #fff;border-right:2px solid #696969;border-bottom:2px solid #696969"></div>
<svg class="a" style="left:1285px;top:124px" width="7" height="4"><path d="M0 0H7L3.5 4Z" fill="#000"/></svg>
<div class="a" style="left:1310px;top:115px;width:317px;height:21px;background:#fff;border-top:2px solid #6d6d6d;border-left:2px solid #6d6d6d;border-right:1px solid #e3e3e3;border-bottom:1px solid #e3e3e3"></div>
<div class="t" style="left:1314px;top:120px;font-size:11px;font-weight:bold;letter-spacing:0.28px;color:#000">Click</div>
<div class="a" style="left:1609px;top:117px;width:17px;height:18px;background:#f0f0f0;border-top:1px solid #fff;border-left:1px solid #fff;border-right:2px solid #696969;border-bottom:2px solid #696969"></div>
<svg class="a" style="left:1614px;top:124px" width="7" height="4"><path d="M0 0H7L3.5 4Z" fill="#000"/></svg>
<div class="a" style="left:972px;top:139px;width:665px;height:700px;background:#fff;border-top:2px solid #6d6d6d;border-left:2px solid #6d6d6d;border-right:1px solid #e3e3e3;border-bottom:1px solid #fff"></div>
<div class="a" style="left:974px;top:141px;width:20px;height:680px;background:#f0f0f0"></div>
<div class="a" style="left:994px;top:141px;width:2px;height:680px;background:#000"></div>
<div class="a" style="left:996px;top:141px;width:623px;height:680px;overflow:hidden">
<div class="code" style="left:10px;top:3px">
<span class="kw">Private Sub</span> CommandButton1_Click()
<span class="kw">Dim</span> au, Z, n, a, dsk, b, c, Kz, nvr, Ts, Tpz, Tp, Pos, Vteor, tv, h, Vtech, Q
au = TextBox1
Z = TextBox2
n = TextBox3
a = TextBox4
dsk = TextBox5
b = TextBox6
c = TextBox7
Kz = TextBox8
nvr = TextBox9
Ts = TextBox10
Tpz = TextBox11
Tp = TextBox12
Tl = TextBox13
nsm = TextBox14
Ksk = TextBox15
dd = TextBox16
f = TextBox17
tipr = TextBox18
tipb = TextBox19
K = TextBox20
tv = TextBox21
Pos = 10 ^ (-2) * K * f * dd
<span class="kw">If</span> tipb = 1 <span class="kw">Then</span>
Vteor = (60 * 1.2 * 10 ^ (-4) * au * Z * n * Tan(a / 2)) / ((9.81 * dsk ^ 2 * c
<span class="kw">Else</span>
h = (1.5 * 10 ^ 2 * Pos) / (dd * f * (Tan(a / 2) + c) * Kz)
Vteor = 10.8 * Ksk * h * nvr
<span class="kw">End If</span>
<span class="kw">If</span> tipr = 1 <span class="kw">Then</span>
Vtech = (400 * Pos * nvr) / (dd ^ 2 * b)
<span class="kw">Else</span>
Vtech = (Pos * nvr) / (2 * b ^ 2 * dd ^ 2)
<span class="kw">End If</span>
Qsm = (Ts - (Tpz - Tp - Tl)) / (60 / Vtech - tv)
Qg = Qsm * nsm
MsgBox Vteor
<span class="kw">End Sub</span></div>
</div>
<div class="a" style="left:1006px;top:527px;width:1px;height:16px;background:#000"></div>
<div class="a" style="left:1619px;top:141px;width:17px;height:680px;background:#f0f0f0"></div>
<div class="a" style="left:1619px;top:141px;width:17px;height:6px;background:#f0f0f0;border-right:1px solid #696969;border-bottom:1px solid #696969;border-top:1px solid #fff;border-left:1px solid #fff"></div>
<div class="a" style="left:1619px;top:148px;width:17px;height:16px;background:#f0f0f0;border-right:2px solid #696969;border-bottom:2px solid #696969;border-top:1px solid #fff;border-left:1px solid #fff"></div>
<svg class="a" style="left:1623px;top:154px" width="7" height="4"><path d="M0 4H7L3.5 0Z" fill="#000"/></svg>
<div class="a" style="left:1619px;top:164px;width:17px;height:640px;background:#f0f0f0;border-right:2px solid #696969;border-bottom:2px solid #696969;border-top:1px solid #fff;border-left:1px solid #fff"></div>
<div class="a" style="left:1619px;top:805px;width:17px;height:16px;background:#f0f0f0;border-right:2px solid #696969;border-bottom:2px solid #696969;border-top:1px solid #fff;border-left:1px solid #fff"></div>
<svg class="a" style="left:1624px;top:812px" width="7" height="4"><path d="M0 0H7L3.5 4Z" fill="#000"/></svg>
<div class="a" style="left:974px;top:821px;width:662px;height:18px;background:#f6f6f6"></div>
<div class="a" style="left:972px;top:821px;width:19px;height:17px;background:#f0f0f0;border-right:2px solid #696969;border-bottom:2px solid #696969;border-left:1px solid #a0a0a0"></div>
<svg class="a" style="left:977px;top:824px" width="11" height="6"><rect x="0" y="0" width="10" height="1" fill="#000"/><rect x="3" y="2" width="7" height="1" fill="#000"/><rect x="0" y="4" width="10" height="1" fill="#000"/></svg>
<div class="a" style="left:991px;top:821px;width:17px;height:17px;background:#f0f0f0;border-left:2px solid #696969;border-top:1px solid #696969"></div>
<svg class="a" style="left:994px;top:825px" width="11" height="10"><rect x="0" y="0" width="10" height="1" fill="#000"/><rect x="3" y="2" width="7" height="1" fill="#000"/><rect x="0" y="4" width="10" height="1" fill="#000"/><rect x="3" y="6" width="7" height="1" fill="#000"/><rect x="0" y="8" width="10" height="1" fill="#000"/></svg>
<div class="a" style="left:1008px;top:821px;width:17px;height:17px;background:#f0f0f0;border-right:2px solid #696969;border-bottom:2px solid #696969;border-top:1px solid #fff;border-left:1px solid #fff"></div>
<svg class="a" style="left:1013px;top:826px" width="4" height="7"><path d="M4 0V7L0 3.5Z" fill="#000"/></svg>
<div class="a" style="left:1025px;top:821px;width:43px;height:17px;background:#f0f0f0;border-right:2px solid #696969;border-bottom:2px solid #696969;border-top:1px solid #fff;border-left:1px solid #fff"></div>
<div class="a" style="left:1602px;top:821px;width:17px;height:17px;background:#f0f0f0;border-right:2px solid #696969;border-bottom:2px solid #696969;border-top:1px solid #fff;border-left:1px solid #fff"></div>
<svg class="a" style="left:1609px;top:826px" width="4" height="7"><path d="M0 0V7L4 3.5Z" fill="#000"/></svg>
<svg class="a" style="left:1624px;top:826px" width="11" height="11"><path d="M10 1L1 10M10 5L5 10M10 9L9 10" stroke="#a0a0a0"/></svg>
</body></html>
